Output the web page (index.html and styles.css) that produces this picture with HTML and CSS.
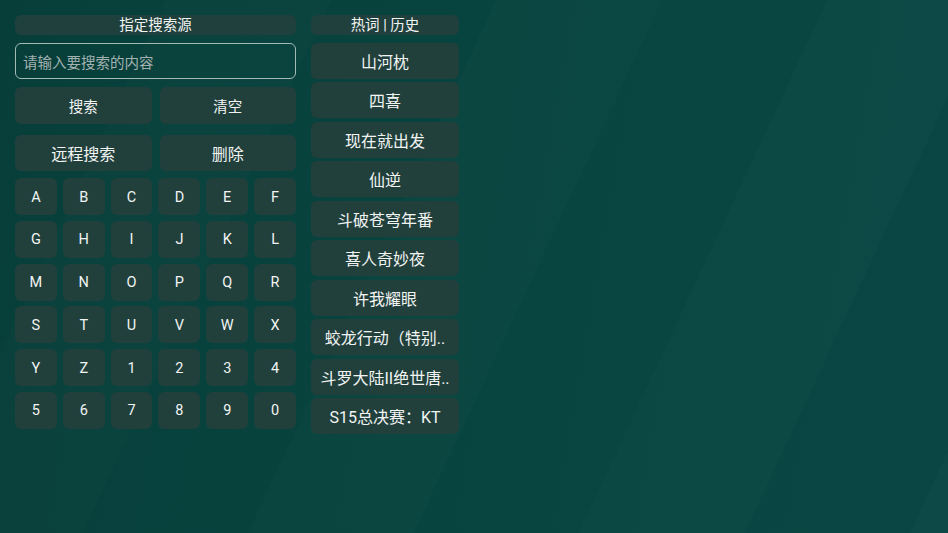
FILE: index.html
```html
<!DOCTYPE html>
<html lang="zh">
<head>
<meta charset="utf-8">
<title>搜索</title>
<link rel="stylesheet" href="styles.css">
</head>
<body>
<div class="page">
  <div class="left">
    <div class="title">指定搜索源</div>
    <div class="input">请输入要搜索的内容</div>
    <div class="actions first">
      <div class="btn small">搜索</div>
      <div class="btn small">清空</div>
    </div>
    <div class="actions second">
      <div class="btn">远程搜索</div>
      <div class="btn">删除</div>
    </div>
    <div class="keys">
      <div class="key">A</div><div class="key">B</div><div class="key">C</div><div class="key">D</div><div class="key">E</div><div class="key">F</div>
      <div class="key">G</div><div class="key">H</div><div class="key">I</div><div class="key">J</div><div class="key">K</div><div class="key">L</div>
      <div class="key">M</div><div class="key">N</div><div class="key">O</div><div class="key">P</div><div class="key">Q</div><div class="key">R</div>
      <div class="key">S</div><div class="key">T</div><div class="key">U</div><div class="key">V</div><div class="key">W</div><div class="key">X</div>
      <div class="key">Y</div><div class="key">Z</div><div class="key">1</div><div class="key">2</div><div class="key">3</div><div class="key">4</div>
      <div class="key">5</div><div class="key">6</div><div class="key">7</div><div class="key">8</div><div class="key">9</div><div class="key">0</div>
    </div>
  </div>
  <div class="right">
    <div class="title">热词 | 历史</div>
    <div class="list">
      <div class="item">山河枕</div>
      <div class="item">四喜</div>
      <div class="item">现在就出发</div>
      <div class="item">仙逆</div>
      <div class="item">斗破苍穹年番</div>
      <div class="item">喜人奇妙夜</div>
      <div class="item">许我耀眼</div>
      <div class="item">蛟龙行动（特别..</div>
      <div class="item">斗罗大陆II绝世唐..</div>
      <div class="item">S15总决赛：KT</div>
    </div>
  </div>
</div>
</body>
</html>
```

FILE: styles.css
```css
html, body {
  margin: 0;
  padding: 0;
  height: 100%;
}
body {
  width: 948px;
  height: 533px;
  overflow: hidden;
  font-family: Roboto, "Noto Sans CJK SC", sans-serif;
  color: #f2f4f3;
  background-color: #08443f;
  background-image:
    repeating-linear-gradient(115deg, rgba(255,255,255,0) 0px, rgba(255,255,255,0) 150px, rgba(255,255,255,0.01) 150px, rgba(255,255,255,0.01) 300px),
    linear-gradient(100deg, #073e3a 0%, #08443f 45%, #0a4744 100%);
}
.page {
  display: flex;
  gap: 15px;
  padding: 15px;
  align-items: flex-start;
}
.left {
  width: 281px;
  display: flex;
  flex-direction: column;
}
.right {
  width: 148px;
  display: flex;
  flex-direction: column;
}
.title {
  height: 20px;
  box-sizing: border-box;
  padding-top: 1px;
  line-height: 20px;
  background: #1f403c;
  border-radius: 6px;
  text-align: center;
  font-size: 14.5px;
}
.input {
  margin-top: 8px;
  height: 36px;
  box-sizing: border-box;
  border: 1.5px solid #a3bab6;
  border-radius: 6px;
  padding-left: 7px;
  display: flex;
  align-items: center;
  font-size: 14.5px;
  color: #a3b2b0;
}
.actions {
  display: grid;
  grid-template-columns: 1fr 1fr;
  gap: 8px;
}
.actions.first { margin-top: 8px; }
.actions.second { margin-top: 11px; }
.btn {
  height: 36.5px;
  border-radius: 6px;
  background: #21403c;
  display: flex;
  align-items: center;
  justify-content: center;
  font-size: 16px;
}
.btn.small { font-size: 14.5px; }
.keys {
  margin-top: 7px;
  display: grid;
  grid-template-columns: repeat(6, 1fr);
  grid-auto-rows: 37px;
  column-gap: 6px;
  row-gap: 5.8px;
}
.key {
  border-radius: 6px;
  background: #21403c;
  display: flex;
  align-items: center;
  justify-content: center;
  padding-top: 1px;
  font-size: 14.5px;
}
.list {
  margin-top: 8px;
  display: flex;
  flex-direction: column;
  gap: 3.45px;
}
.item {
  height: 36px;
  border-radius: 6px;
  background: #21403c;
  display: flex;
  align-items: center;
  justify-content: center;
  font-size: 16px;
  white-space: nowrap;
  overflow: hidden;
}
```
